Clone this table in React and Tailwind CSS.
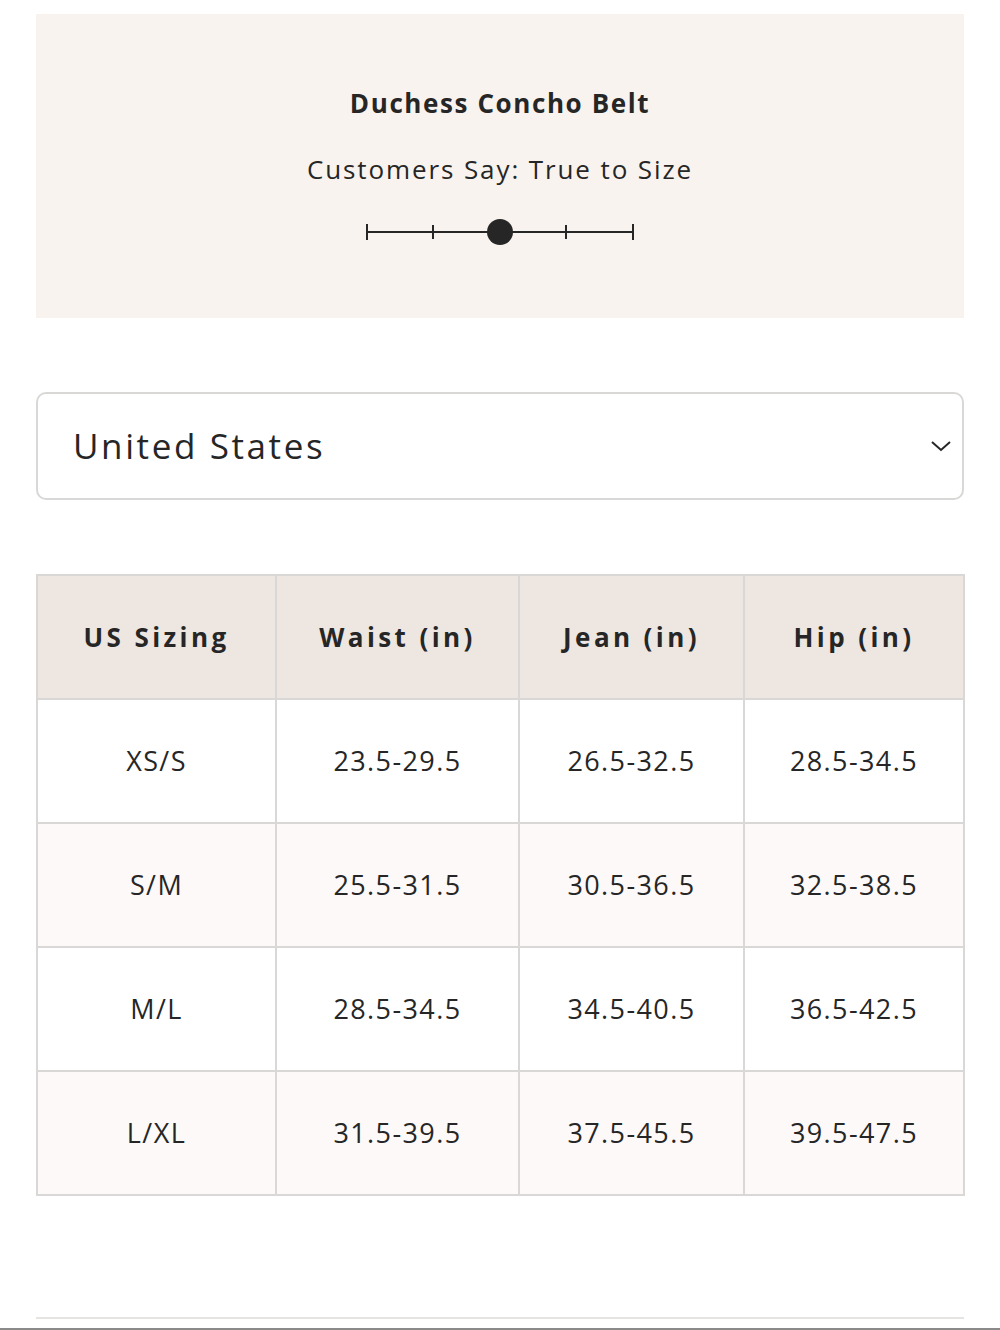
import React from "react";

const rows = [
  ["XS/S", "23.5-29.5", "26.5-32.5", "28.5-34.5"],
  ["S/M", "25.5-31.5", "30.5-36.5", "32.5-38.5"],
  ["M/L", "28.5-34.5", "34.5-40.5", "36.5-42.5"],
  ["L/XL", "31.5-39.5", "37.5-45.5", "39.5-47.5"],
];

export default function App() {
  return (
    <div className="w-[1000px] h-[1330px] bg-white text-[#262626] flex flex-col" style={{ fontFamily: '"Open Sans", "Noto Sans", sans-serif' }}>
      <div className="px-[36px] pt-[14px] flex flex-col">
        <div className="h-[304px] bg-[#f9f3ef] flex flex-col items-center">
          <div className="mt-[71px] text-[26px] leading-[36px] font-bold tracking-[1.6px]">Duchess Concho Belt</div>
          <div className="mt-[30px] text-[26px] leading-[36px] tracking-[1.9px]">Customers Say: True to Size</div>
          <svg className="mt-[30px]" width="270" height="30" viewBox="0 0 270 30">
            <line x1="2" y1="15" x2="268" y2="15" stroke="#262626" strokeWidth="2" />
            <line x1="2" y1="7" x2="2" y2="23" stroke="#262626" strokeWidth="2" />
            <line x1="68" y1="8" x2="68" y2="22" stroke="#262626" strokeWidth="2" />
            <line x1="201" y1="8" x2="201" y2="22" stroke="#262626" strokeWidth="2" />
            <line x1="268" y1="7" x2="268" y2="23" stroke="#262626" strokeWidth="2" />
            <circle cx="135" cy="15" r="13" fill="#262626" />
          </svg>
        </div>

        <div className="mt-[74px] h-[108px] border-2 border-[#d9d8d6] rounded-[10px] flex items-center justify-between pl-[35px] pr-[10px]">
          <span className="text-[35px] tracking-[2.6px]">United States</span>
          <svg width="22" height="14" viewBox="0 0 22 14">
            <path d="M2 3 L11 11 L20 3" fill="none" stroke="#262626" strokeWidth="2" />
          </svg>
        </div>

        <table className="mt-[74px] w-[927px] border-collapse border-2 border-[#d9d8d6] table-fixed">
          <colgroup>
            <col className="w-[239px]" />
            <col className="w-[243px]" />
            <col className="w-[225px]" />
            <col className="w-[220px]" />
          </colgroup>
          <thead>
            <tr className="h-[124px] bg-[#ede6e1]">
              {["US Sizing", "Waist (in)", "Jean (in)", "Hip (in)"].map((h) => (
                <th key={h} className="border-2 border-[#d9d8d6] text-[26px] font-bold tracking-[3.4px] text-center align-middle">{h}</th>
              ))}
            </tr>
          </thead>
          <tbody>
            {rows.map((r, i) => (
              <tr key={i} className={i % 2 === 1 ? "h-[124px] bg-[#fdf9f8]" : "h-[124px] bg-white"}>
                {r.map((c, j) => (
                  <td key={j} className="border-2 border-[#d9d8d6] text-[27px] tracking-[1.4px] text-center align-middle">{c}</td>
                ))}
              </tr>
            ))}
          </tbody>
        </table>

        <div className="mt-[121px] h-[2px] bg-[#e6e4e2]"></div>
      </div>
      <div className="flex-1"></div>
      <div className="h-[2px] bg-[#8a8a8a]"></div>
    </div>
  );
}
